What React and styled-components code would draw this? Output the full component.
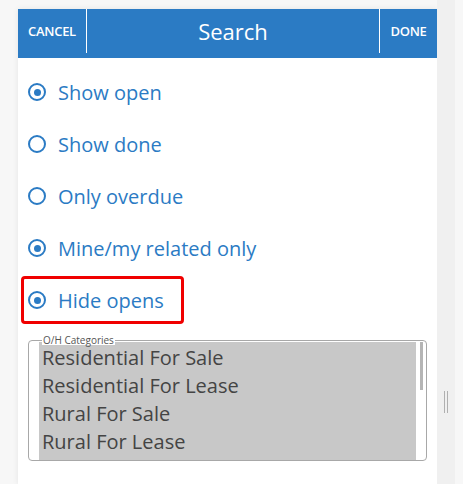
import styled, { createGlobalStyle } from 'styled-components';
import { useState } from 'react';

const GlobalStyle = createGlobalStyle`
  html, body {
    margin: 0;
    padding: 0;
    background: #f7f7f7;
    font-family: "Open Sans", "Liberation Sans", sans-serif;
  }
`;

const options = [
  { label: 'Show open', checked: true },
  { label: 'Show done', checked: false },
  { label: 'Only overdue', checked: false },
  { label: 'Mine/my related only', checked: true },
  { label: 'Hide opens', checked: true, highlight: true },
];

const categories = [
  'Residential For Sale',
  'Residential For Lease',
  'Rural For Sale',
  'Rural For Lease',
  'Commercial For Sale',
];

const App = () => {
  const [opts, setOpts] = useState(options);

  const toggle = (i) => {
    setOpts(opts.map((o, idx) => (idx === i ? { ...o, checked: !o.checked } : o)));
  };

  return (
    <Page>
      <GlobalStyle />
      <Panel>
        <Header>
          <SideButton>CANCEL</SideButton>
          <Title>Search</Title>
          <SideButton>DONE</SideButton>
        </Header>
        <Options>
          {opts.map((o, i) => (
            <Row key={o.label}>
              <Option $highlight={o.highlight} onClick={() => toggle(i)}>
                <Radio $checked={o.checked} />
                <Label>{o.label}</Label>
              </Option>
            </Row>
          ))}
        </Options>
        <Fieldset>
          <Legend>O/H Categories</Legend>
          <ListBox>
            <Items>
              {categories.map((c) => (
                <Item key={c}>{c}</Item>
              ))}
            </Items>
            <Track>
              <Thumb />
            </Track>
          </ListBox>
        </Fieldset>
      </Panel>
      <Gutter>
        <Handle />
      </Gutter>
    </Page>
  );
};

export default App;

const Page = styled.div`
  display: flex;
  height: 484px;
  overflow: hidden;
  padding-left: 18px;
  padding-top: 9px;
  box-sizing: border-box;
`;

const Panel = styled.div`
  width: 419px;
  background: #ffffff;
  box-shadow: 0 0 6px rgba(0, 0, 0, 0.08);
  display: flex;
  flex-direction: column;
`;

const Header = styled.div`
  height: 49px;
  background: #2b7bc4;
  display: flex;
  align-items: stretch;
  color: #ffffff;
`;

const SideButton = styled.div`
  width: 68px;
  height: 44px;
  display: flex;
  align-items: center;
  justify-content: center;
  font-size: 13px;
  font-weight: 600;
  letter-spacing: -0.3px;
  &:first-child {
    border-right: 1px solid #ffffff;
  }
  &:last-child {
    width: 57px;
    border-left: 1px solid #ffffff;
  }
`;

const Title = styled.div`
  flex: 1;
  display: flex;
  align-items: center;
  justify-content: center;
  font-size: 22px;
  padding-bottom: 5px;
`;

const Options = styled.div`
  display: flex;
  flex-direction: column;
  padding-top: 8px;
  padding-bottom: 9px;
`;

const Row = styled.div`
  height: 52px;
  display: flex;
  align-items: center;
  padding-left: 3px;
`;

const Option = styled.div`
  display: flex;
  align-items: center;
  gap: 12px;
  height: 48px;
  box-sizing: border-box;
  padding: 0 0 0 4px;
  width: ${(p) => (p.$highlight ? '163px' : 'auto')};
  border: 3px solid ${(p) => (p.$highlight ? '#f00000' : 'transparent')};
  border-radius: 4px;
  cursor: pointer;
`;

const Radio = styled.span`
  width: 18px;
  height: 18px;
  box-sizing: border-box;
  border: 2.5px solid #2b7bc4;
  border-radius: 50%;
  display: flex;
  align-items: center;
  justify-content: center;
  flex-shrink: 0;
  &::after {
    content: '';
    width: 7px;
    height: 7px;
    border-radius: 50%;
    background: ${(p) => (p.$checked ? '#2b7bc4' : 'transparent')};
  }
`;

const Label = styled.span`
  font-size: 20px;
  color: #2b7bc4;
  white-space: nowrap;
`;

const Fieldset = styled.fieldset`
  margin: 1px 10px 0 10px;
  padding: 0 0 0 10px;
  border: 1px solid #a8a8a8;
  border-radius: 4px;
  height: 125px;
  box-sizing: border-box;
  min-width: 0;
`;

const Legend = styled.legend`
  font-size: 10px;
  color: #555555;
  padding: 0 1px;
  margin-left: 3px;
  line-height: 9px;
  position: relative;
  z-index: 1;
  background: #ffffff;
`;

const ListBox = styled.div`
  display: flex;
  height: 118px;
  overflow: hidden;
  margin-top: -3px;
`;

const Items = styled.div`
  flex: 1;
  background: #c8c8c8;
  padding-top: 2px;
`;

const Item = styled.div`
  font-size: 20px;
  line-height: 28px;
  color: #444444;
  padding-left: 3px;
  white-space: nowrap;
`;

const Track = styled.div`
  width: 10px;
  display: flex;
  justify-content: center;
`;

const Thumb = styled.div`
  width: 3px;
  height: 48px;
  background: #b5b5b5;
`;

const Gutter = styled.div`
  width: 18px;
  margin-top: -9px;
  background: #f0f0f0;
  display: flex;
  justify-content: center;
  padding-top: 391px;
  box-sizing: border-box;
`;

const Handle = styled.div`
  width: 2px;
  height: 22px;
  border-left: 1px solid #b0b0b0;
  border-right: 1px solid #b0b0b0;
`;
